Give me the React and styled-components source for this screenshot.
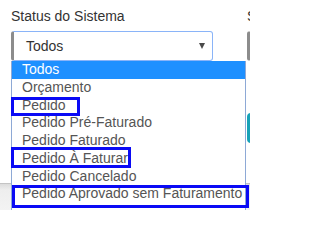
import React from 'react'
import styled, { createGlobalStyle } from 'styled-components'

const GlobalStyle = createGlobalStyle`
    body {
        margin: 0;
        background: #fff;
        font-family: "Liberation Sans", Arial, sans-serif;
    }
`

const Page = styled.div`
    position: relative;
    width: 250px;
    height: 210px;
    overflow: hidden;
    display: flex;
    flex-direction: column;
`

const FilterRow = styled.div`
    display: flex;
    gap: 34px;
    padding: 6px 0 0 11px;
`

const Field = styled.div`
    flex: 0 0 ${(p) => p.width}px;
    display: flex;
    flex-direction: column;
`

const Label = styled.label`
    font-size: 14px;
    line-height: 20px;
    color: #333;
    white-space: nowrap;
    margin-bottom: 5px;
`

const SelectWrap = styled.div`
    position: relative;
`

const SelectBox = styled.div`
    box-sizing: border-box;
    height: 30px;
    display: flex;
    align-items: center;
    justify-content: space-between;
    padding: 0 7px 0 12px;
    border: 1px solid ${(p) => (p.focused ? '#8ab4f8' : '#c8c8c8')};
    border-left: 3px solid #8c8c8c;
    border-radius: 3px;
    font-size: 14px;
    color: #333;
    background: #fff;
`

const Arrow = styled.span`
    width: 0;
    height: 0;
    border-left: 3.5px solid transparent;
    border-right: 3.5px solid transparent;
    border-top: 6px solid #4a4a4a;
`

const OptionList = styled.ul`
    position: absolute;
    top: 100%;
    left: 0;
    width: 235px;
    box-sizing: border-box;
    margin: 0;
    padding: 0 0 12px;
    list-style: none;
    background: #fff;
    border: 1px solid #8ea9d6;
    border-top: none;
    z-index: 2;
`

const Option = styled.li`
    position: relative;
    height: 17.75px;
    line-height: 17.75px;
    padding-left: 10px;
    font-size: 14px;
    white-space: nowrap;
    color: ${(p) => (p.selected ? '#fff' : '#555')};
    background: ${(p) => (p.selected ? '#1e90ff' : 'transparent')};
`

// blue annotation frames drawn over some options in the screenshot
const Mark = styled.span`
    position: absolute;
    box-sizing: border-box;
    top: ${(p) => p.top}px;
    left: ${(p) => p.left}px;
    width: ${(p) => p.w}px;
    height: ${(p) => p.h}px;
    border: 3px solid #0a0af5;
    pointer-events: none;
`

const SearchButton = styled.button`
    margin-top: 52px;
    height: 30px;
    width: 90px;
    border: none;
    border-radius: 4px;
    background: #17a2b8;
    color: #fff;
    font-family: inherit;
    font-size: 14px;
`

const Footer = styled.div`
    margin-top: auto;
    height: 26px;
    border-top: 1px solid #c4c4c4;
    background: linear-gradient(#dcdcdc, #eeeeee 6px, #f3f3f3);
`

const options = [
    { label: 'Todos', selected: true },
    { label: 'Orçamento' },
    { label: 'Pedido', mark: { top: 0, left: -1, w: 69, h: 19 } },
    { label: 'Pedido Pré-Faturado' },
    { label: 'Pedido Faturado' },
    { label: 'Pedido À Faturar', mark: { top: -3, left: -1, w: 120, h: 21 } },
    { label: 'Pedido Cancelado' },
    { label: 'Pedido Aprovado sem Faturamento', mark: { top: 0, left: 0, w: 237, h: 23 } },
]

const App = () => {
    return (
        <Page>
            <GlobalStyle />
            <FilterRow>
                <Field width={202}>
                    <Label>Status do Sistema</Label>
                    <SelectWrap>
                        <SelectBox focused>
                            <span>Todos</span>
                            <Arrow />
                        </SelectBox>
                        <OptionList>
                            {options.map((o) => (
                                <Option key={o.label} selected={o.selected}>
                                    {o.label}
                                    {o.mark && <Mark {...o.mark} />}
                                </Option>
                            ))}
                        </OptionList>
                    </SelectWrap>
                </Field>
                <Field width={202}>
                    <Label>Status Financeiro</Label>
                    <SelectBox>
                        <span>Todos</span>
                        <Arrow />
                    </SelectBox>
                    <SearchButton>Pesquisar</SearchButton>
                </Field>
            </FilterRow>
            <Footer />
        </Page>
    )
}

export default App
